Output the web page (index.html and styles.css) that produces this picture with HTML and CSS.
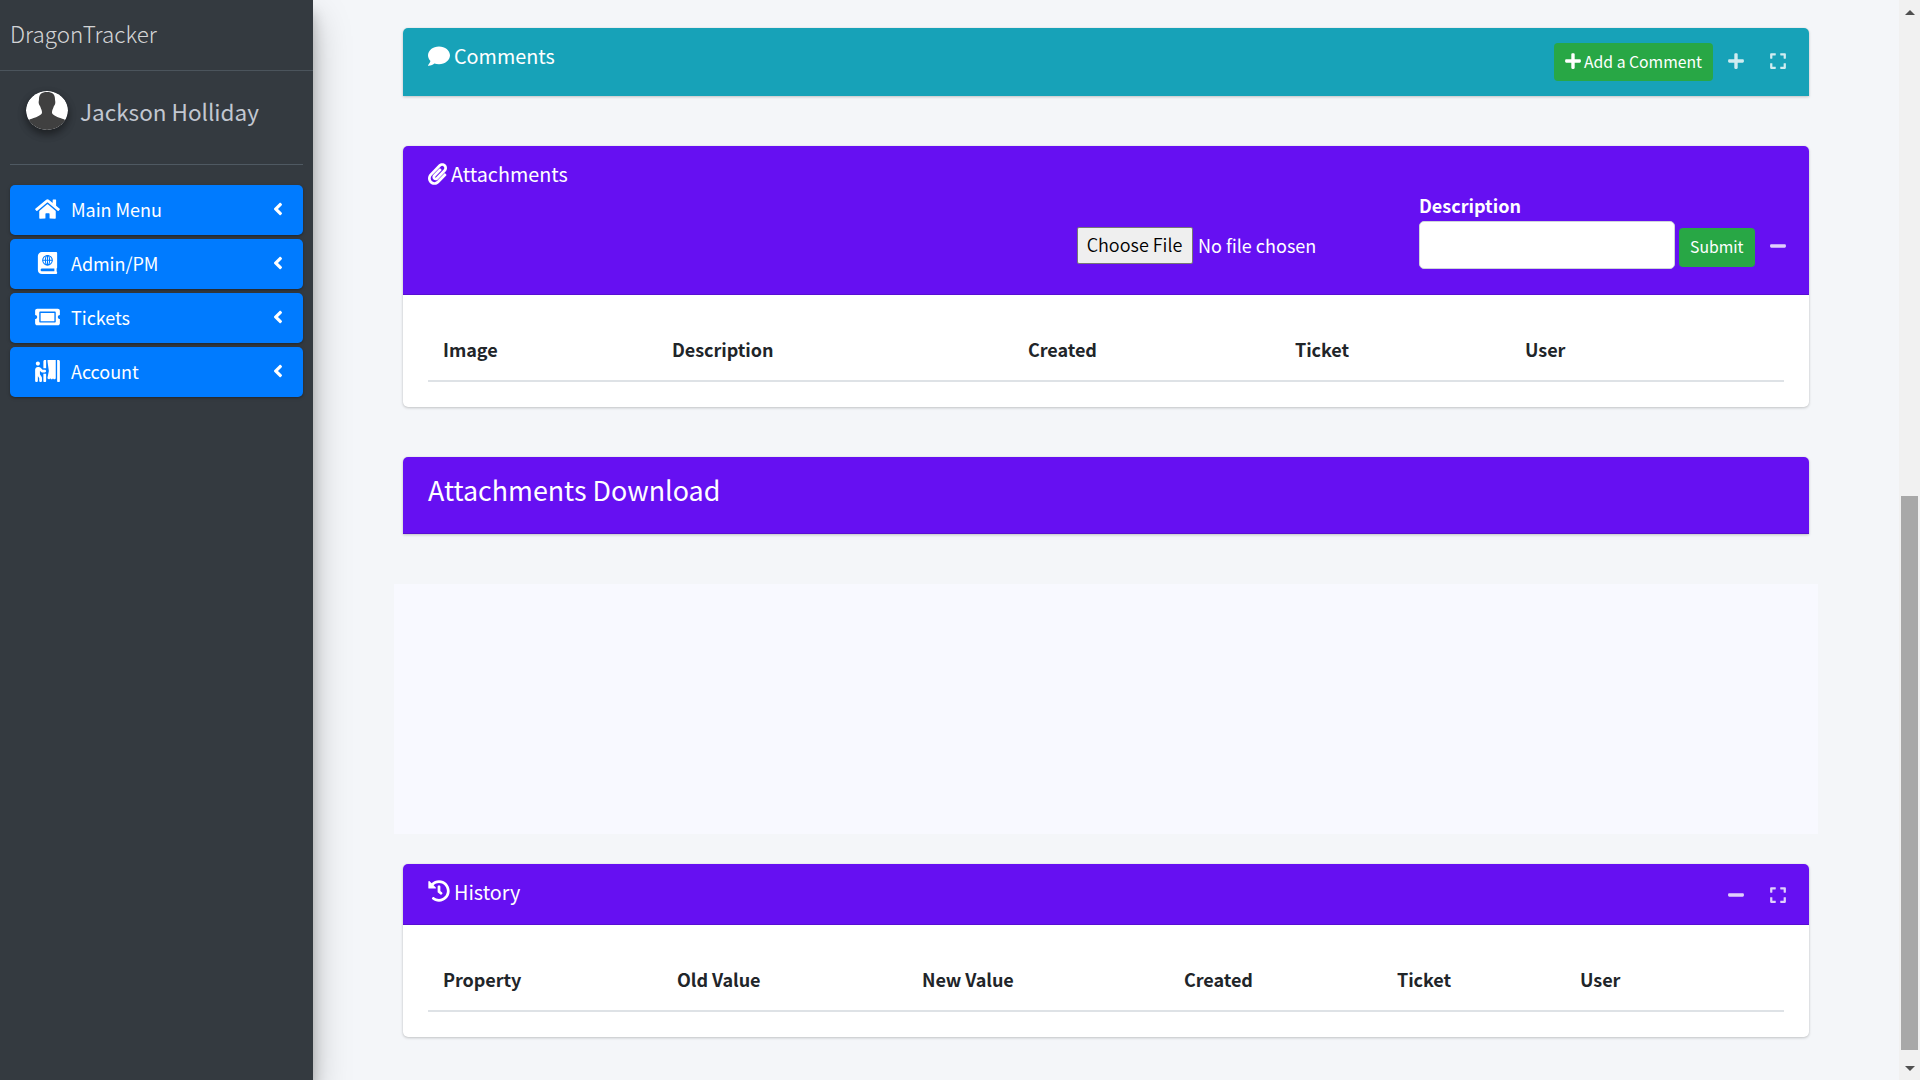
FILE: index.html
```html
<!DOCTYPE html>
<html lang="en">
<head>
<meta charset="utf-8">
<title>DragonTracker</title>
<link rel="stylesheet" href="styles.css">
</head>
<body>
<svg class="sprite" aria-hidden="true">
  <symbol id="home" viewBox="0 0 576 512"><path d="M280.37 148.26L96 300.11V464a16 16 0 0 0 16 16l112.06-.29a16 16 0 0 0 15.92-16V368a16 16 0 0 1 16-16h64a16 16 0 0 1 16 16v95.64a16 16 0 0 0 16 16.05L464 480a16 16 0 0 0 16-16V300L295.67 148.26a12.19 12.19 0 0 0-15.3 0zM571.6 251.47L488 182.56V44.05a12 12 0 0 0-12-12h-56a12 12 0 0 0-12 12v72.61L318.47 43a48 48 0 0 0-61 0L4.34 251.47a12 12 0 0 0-1.6 16.9l25.5 31A12 12 0 0 0 45.15 301l235.22-193.74a12.19 12.19 0 0 1 15.3 0L530.9 301a12 12 0 0 0 16.9-1.6l25.5-31a12 12 0 0 0-1.7-16.93z"/></symbol>
  <symbol id="atlas" viewBox="0 0 448 512"><path d="M448 358.4V25.6c0-16-9.6-25.6-25.6-25.6H96C41.6 0 0 41.6 0 96v320c0 54.4 41.6 96 96 96h326.4c12.8 0 25.6-9.6 25.6-25.6v-16c0-6.4-3.2-12.8-9.6-19.2-3.2-16-3.2-60.8 0-73.6 6.4-3.2 9.6-9.6 9.6-19.2zM384 448H96c-16 0-32-16-32-32s16-32 32-32h288v64z"/><g fill="none" stroke="#007bff" stroke-width="24"><circle cx="224" cy="192" r="112"/><ellipse cx="224" cy="192" rx="48" ry="112"/><path d="M112 192h224M224 80v224"/></g></symbol>
  <symbol id="ticket" viewBox="0 0 576 512"><path d="M128 160h320v192H128V160zm400 96c0 26.51 21.49 48 48 48v96c0 26.51-21.49 48-48 48H48c-26.51 0-48-21.49-48-48v-96c26.51 0 48-21.49 48-48s-21.49-48-48-48v-96c0-26.51 21.49-48 48-48h480c26.51 0 48 21.49 48 48v96c-26.51 0-48 21.49-48 48zm-48-104c0-13.255-10.745-24-24-24H120c-13.255 0-24 10.745-24 24v208c0 13.255 10.745 24 24 24h336c13.255 0 24-10.745 24-24V152z"/></symbol>
  <symbol id="booth" viewBox="0 0 576 512"><path d="M192 496c0 8.8 7.2 16 16 16h32c8.8 0 16-7.2 16-16V320h-64v176zm32-272h-50.9l-45.2-45.3C115.8 166.6 99.7 160 82.7 160H64c-17.1 0-33.2 6.7-45.3 18.8C6.7 190.9 0 206.9 0 224.1L.2 320 0 480c0 17.7 14.3 32 31.9 32 17.6 0 32-14.3 32-32l.1-100.7c.9.5 1.6 1.3 2.5 1.7l29.1 43v56c0 17.7 14.3 32 32 32s32-14.3 32-32v-56.5c0-9.9-2.3-19.8-6.7-28.6l-41.2-61.3V253l20.9 20.9c9.1 9.1 21.1 14.1 33.9 14.1H224c17.7 0 32-14.3 32-32s-14.3-32-32-32zM64 128c26.5 0 48-21.5 48-48S90.500 32 64 32 16 53.500 16 80s21.500 48 48 48zm224-96l31.500 223.100-30.900 154.600c-4.300 21.600 13 38.300 31.400 38.300 15.200 0 28-9.100 32.300-30.400.9 16.900 14.600 30.400 31.700 30.400 17.700 0 32-14.300 32-32 0 17.700 14.300 32 32 32s32-14.300 32-32V0H288v32zm-96 0v160h64V0h-32c-17.700 0-32 14.300-32 32zM544 0h-32v496c0 8.800 7.200 16 16 16h32c8.800 0 16-7.200 16-16V32c0-17.700-14.300-32-32-32z"/></symbol>
  <symbol id="angle" viewBox="0 0 256 512"><path d="M31.7 239l136-136c9.4-9.4 24.6-9.4 33.9 0l22.6 22.6c9.4 9.4 9.4 24.6 0 33.9L127.9 256l96.4 96.4c9.4 9.4 9.4 24.6 0 33.9L201.7 409c-9.4 9.4-24.6 9.4-33.9 0l-136-136c-9.5-9.4-9.5-24.6-.1-34z"/></symbol>
  <symbol id="comment" viewBox="0 0 512 512"><path d="M256 32C114.6 32 0 125.1 0 240c0 49.6 21.4 95 57 130.7C44.5 421.1 2.7 466 2.2 466.5c-2.2 2.3-2.8 5.7-1.5 8.7S4.8 480 8 480c66.3 0 116-31.8 140.6-51.4 32.7 12.3 69 19.4 107.4 19.4 141.4 0 256-93.1 256-208S397.4 32 256 32z"/></symbol>
  <symbol id="clip" viewBox="0 0 448 512"><path d="M43.246 466.142c-58.43-60.289-57.341-157.511 1.386-217.581L254.392 34c44.316-45.332 116.351-45.336 160.671 0 43.89 44.894 43.943 117.329 0 162.276L232.214 383.128c-29.855 30.537-78.633 30.111-107.982-.998-28.275-29.97-27.368-77.473 1.452-106.953l143.743-146.835c6.182-6.314 16.312-6.422 22.626-.241l22.861 22.379c6.315 6.182 6.422 16.312.241 22.626L171.427 319.927c-4.932 5.045-5.236 13.428-.648 18.292 4.372 4.634 11.245 4.711 15.688.165l182.849-186.851c19.613-20.062 19.613-52.725-.011-72.798-19.189-19.627-49.957-19.637-69.154 0L90.39 293.295c-34.763 35.56-35.299 93.12-1.191 128.313 34.01 35.093 88.985 35.137 123.058.286l172.06-175.999c6.177-6.319 16.307-6.433 22.626-.256l22.877 22.364c6.319 6.177 6.434 16.307.256 22.626l-172.06 175.998c-59.576 60.938-155.943 60.216-214.77-.485z"/></symbol>
  <symbol id="history" viewBox="0 0 512 512"><path d="M504 255.531c.253 136.64-111.18 248.372-247.82 248.468-59.015.042-113.223-20.53-155.822-54.911-11.077-8.94-11.905-25.541-1.839-35.607l11.267-11.267c8.609-8.609 22.353-9.551 31.891-1.984C173.062 425.135 212.781 440 256 440c101.705 0 184-82.311 184-184 0-101.705-82.311-184-184-184-48.814 0-93.149 18.969-126.068 49.932l50.754 50.754c10.08 10.08 2.941 27.314-11.313 27.314H24c-8.837 0-16-7.163-16-16V38.627c0-14.254 17.234-21.393 27.314-11.314l49.372 49.372C129.209 34.136 189.552 8 256 8c136.81 0 247.747 110.78 248 247.531zm-180.912 78.784l9.823-12.63c8.138-10.463 6.253-25.542-4.21-33.679L288 256.349V152c0-13.255-10.745-24-24-24h-16c-13.255 0-24 10.745-24 24v135.651l65.409 50.874c10.463 8.137 25.541 6.253 33.679-4.21z"/></symbol>
  <symbol id="plus" viewBox="0 0 448 512"><path d="M416 208H272V64c0-17.67-14.33-32-32-32h-32c-17.67 0-32 14.33-32 32v144H32c-17.67 0-32 14.33-32 32v32c0 17.67 14.33 32 32 32h144v144c0 17.67 14.33 32 32 32h32c17.67 0 32-14.33 32-32V304h144c17.67 0 32-14.33 32-32v-32c0-17.67-14.33-32-32-32z"/></symbol>
  <symbol id="minus" viewBox="0 0 448 512"><path d="M416 208H32c-17.67 0-32 14.33-32 32v32c0 17.67 14.33 32 32 32h384c17.67 0 32-14.33 32-32v-32c0-17.67-14.33-32-32-32z"/></symbol>
  <symbol id="expand" viewBox="0 0 448 512"><path d="M0 180V56c0-13.3 10.7-24 24-24h124c6.6 0 12 5.4 12 12v40c0 6.6-5.4 12-12 12H64v84c0 6.6-5.4 12-12 12H12c-6.6 0-12-5.4-12-12zM288 44v40c0 6.6 5.4 12 12 12h84v84c0 6.6 5.4 12 12 12h40c6.6 0 12-5.4 12-12V56c0-13.3-10.7-24-24-24H300c-6.6 0-12 5.4-12 12zm148 276h-40c-6.6 0-12 5.4-12 12v84h-84c-6.6 0-12 5.4-12 12v40c0 6.6 5.4 12 12 12h124c13.3 0 24-10.7 24-24V332c0-6.6-5.4-12-12-12zM160 468v-40c0-6.6-5.4-12-12-12H64v-84c0-6.6-5.4-12-12-12H12c-6.6 0-12 5.4-12 12v124c0 13.3 10.7 24 24 24h124c6.6 0 12-5.4 12-12z"/></symbol>
</svg>
<div class="app">
  <aside class="sidebar">
    <a class="brand">DragonTracker</a>
    <div class="user">
      <svg class="avatar" viewBox="0 0 42 39"><defs><clipPath id="face"><ellipse cx="21" cy="19.5" rx="21" ry="19.5"/></clipPath></defs><g clip-path="url(#face)"><path fill="#fff" d="M0 0h42v39H0z"/><path fill="#404040" d="M21 1c5.500 0 8 2.500 8 7 0 2 .6 2.500.2 4.500-.5 2-1.200 2-1.600 3.500-.8 2.500-1.600 3-1.600 5.500 0 2.500 5 4.500 9 5.800 3 1 6 2 7 5.700v6H0v-6c1-3.700 4-4.700 7-5.700 4-1.300 9-3.300 9-5.800 0-2.500-.8-3-1.600-5.500-.4-1.500-1.100-1.500-1.600-3.500-.4-2 .2-2.500.2-4.500 0-4.500 2.500-7 8-7z"/></g></svg>
      <span class="user-name">Jackson Holliday</span>
    </div>
    <nav class="menu">
      <a class="menu-item"><svg class="menu-icon"><use href="#home"/></svg><span class="menu-text">Main Menu</span><svg class="angle"><use href="#angle"/></svg></a>
      <a class="menu-item"><svg class="menu-icon"><use href="#atlas"/></svg><span class="menu-text">Admin/PM</span><svg class="angle"><use href="#angle"/></svg></a>
      <a class="menu-item"><svg class="menu-icon"><use href="#ticket"/></svg><span class="menu-text">Tickets</span><svg class="angle"><use href="#angle"/></svg></a>
      <a class="menu-item"><svg class="menu-icon"><use href="#booth"/></svg><span class="menu-text">Account</span><svg class="angle"><use href="#angle"/></svg></a>
    </nav>
  </aside>
  <main class="content">
    <section class="card comments">
      <header class="card-header">
        <h3 class="card-title"><svg class="title-icon"><use href="#comment"/></svg>Comments</h3>
        <div class="tools">
          <button class="btn btn-add"><svg class="tool-icon"><use href="#plus"/></svg>Add a Comment</button>
          <svg class="tool-icon tool"><use href="#plus"/></svg>
          <svg class="tool-icon tool"><use href="#expand"/></svg>
        </div>
      </header>
    </section>
    <section class="card attachments">
      <header class="card-header">
        <h3 class="card-title"><svg class="title-icon narrow"><use href="#clip"/></svg>Attachments</h3>
        <form class="upload">
          <div class="file"><button type="button" class="file-btn">Choose File</button><span class="file-name">No file chosen</span></div>
          <div class="field"><label class="label" for="desc">Description</label><input class="input" id="desc" type="text"></div>
          <button type="button" class="btn btn-submit">Submit</button>
          <svg class="tool-icon tool"><use href="#minus"/></svg>
        </form>
      </header>
      <div class="card-body">
        <div class="thead cols-files"><span>Image</span><span>Description</span><span>Created</span><span>Ticket</span><span>User</span></div>
      </div>
    </section>
    <section class="card download">
      <header class="card-header"><h2 class="download-title">Attachments Download</h2></header>
    </section>
    <div class="placeholder"></div>
    <section class="card history">
      <header class="card-header">
        <h3 class="card-title"><svg class="title-icon"><use href="#history"/></svg>History</h3>
        <div class="tools">
          <svg class="tool-icon tool"><use href="#minus"/></svg>
          <svg class="tool-icon tool"><use href="#expand"/></svg>
        </div>
      </header>
      <div class="card-body">
        <div class="thead cols-history"><span>Property</span><span>Old Value</span><span>New Value</span><span>Created</span><span>Ticket</span><span>User</span></div>
      </div>
    </section>
  </main>
  <div class="scrollbar">
    <span class="arrow up"></span>
    <span class="thumb"></span>
    <span class="arrow down"></span>
  </div>
</div>
</body>
</html>
```
FILE: styles.css
```css
* { box-sizing: border-box; }
body {
  margin: 0;
  height: 1080px;
  overflow: hidden;
  background: #f4f6f9;
  color: #212529;
  font: 400 18px/30px "Noto Sans CJK SC", "Noto Sans", sans-serif;
}
svg { fill: currentColor; flex: none; display: block; }
button { font-family: inherit; margin: 0; }
.sprite { display: none; }
.app { display: flex; height: 1080px; }

/* Sidebar */
.sidebar {
  width: 313px;
  flex: none;
  background: #343a40;
  box-shadow: 0 17.5px 35px rgba(0,0,0,.25), 0 12.5px 12.5px rgba(0,0,0,.22);
}
.brand {
  display: block;
  height: 71px;
  padding: 14px 10px 0;
  border-bottom: 1px solid #4b545c;
  color: rgba(255,255,255,.8);
  font-size: 22.4px;
  line-height: 38px;
  font-weight: 300;
}
.user {
  display: flex;
  align-items: flex-start;
  gap: 12px;
  height: 94px;
  margin: 0 10px;
  padding: 20px 16px 0;
  border-bottom: 1px solid #4f5962;
  color: #c2c7d0;
}
.avatar {
  width: 42px;
  height: 39px;
  border-radius: 50%;
  box-shadow: 0 4px 8px rgba(0,0,0,.3), 0 4px 8px rgba(0,0,0,.23);
}
.user-name { font-size: 22.5px; line-height: 40px; }
.menu { display: grid; gap: 4px; padding: 20px 10px; }
.menu-item {
  display: flex;
  align-items: center;
  height: 50px;
  padding: 0 20px 2px 25px;
  border-radius: 5px;
  background: #007bff;
  color: #fff;
  box-shadow: 0 1px 4px rgba(0,0,0,.12), 0 1px 2px rgba(0,0,0,.24);
}
.menu-icon { width: 25px; height: 22px; }
.menu-text { flex: 1; margin-left: 11px; letter-spacing: -.05px; }
.angle { width: 10px; height: 20px; }

/* Cards */
.content {
  flex: 1;
  display: flex;
  flex-direction: column;
  padding: 28px 90px 0;
}
.card {
  flex: none;
  margin-bottom: 50px;
  border-radius: 5px;
  background: #fff;
  box-shadow: 0 0 1px rgba(0,0,0,.125), 0 1px 3px rgba(0,0,0,.2);
}
.card-header {
  display: flex;
  justify-content: space-between;
  height: 61px;
  padding: 15px 25px 0;
  border-radius: 5px 5px 0 0;
  border-bottom: 1px solid rgba(0,0,0,.125);
  background: #6610f2;
  color: #fff;
}
.card-title {
  display: flex;
  gap: 4px;
  height: 30px;
  margin: 0;
  font-size: 19.8px;
  line-height: 26px;
  font-weight: 400;
}
.title-icon { width: 22px; height: 22px; margin-top: 2px; }
.title-icon.narrow { width: 19px; }
.tools { display: flex; align-items: center; height: 38px; gap: 26px; margin-right: -2px; }
.tool { opacity: .8; }
.tool-icon { width: 16px; height: 18px; }
.comments, .comments .card-header { height: 68px; border-radius: 5px 5px 0 0; }
.comments .card-header { background: #17a2b8; border-bottom: 0; }
.comments .tool { margin-top: -2px; }
.btn {
  display: flex;
  align-items: center;
  height: 38px;
  padding: 0 11px;
  border: 0;
  border-radius: 4px;
  background: #28a745;
  color: #fff;
  font-size: 15.75px;
  line-height: 26px;
  white-space: nowrap;
}
.btn-add { width: 159px; gap: 3px; margin-right: -11px; }
.btn-add .tool-icon { margin-top: -2px; }

.attachments .card-header { height: 149px; }
.attachments .card-body { height: 112px; }
.upload {
  display: flex;
  align-items: flex-start;
  padding-top: 22px;
  margin-right: -2px;
}
.file { display: flex; gap: 5px; margin: 44px 105px 0 0; }
.file-btn {
  width: 116px;
  height: 37px;
  padding: 0 1px 3px 0;
  border: 1px solid #767676;
  border-radius: 2px;
  background: #efefef;
  color: #000;
  font-size: 18px;
  font-weight: 350;
  white-space: nowrap;
}
.file-name { width: 116px; line-height: 36px; white-space: nowrap; }
.field { display: flex; flex-direction: column; width: 256px; }
.label { height: 38px; line-height: 44px; font-weight: 700; }
.input {
  width: 256px;
  height: 48px;
  border: 1px solid #ced4da;
  border-radius: 5px;
  background: #fff;
}
.btn-submit { width: 76px; height: 39px; margin: 45px 15px 0 4px; padding-bottom: 2px; }
.upload .tool { margin-top: 54px; }

.card-body { height: 112px; padding: 25px; }
.thead {
  display: grid;
  height: 62px;
  padding-top: 14px;
  border-bottom: 2px solid #dee2e6;
  font-weight: 700;
  letter-spacing: -.05px;
}
.thead span { padding-left: 15px; }
.cols-files { grid-template-columns: 229px 356px 267px 230px 1fr; }
.cols-history { grid-template-columns: 234px 245px 262px 213px 183px 1fr; }

.download, .download .card-header { height: 77px; border-radius: 5px 5px 0 0; }
.download-title { margin: 0; font-size: 26.85px; line-height: 36px; font-weight: 400; }
.placeholder { flex: none; height: 250px; margin: 0 -9px 30px; background: #f8f9ff; }
.history .card-header { height: 61px; padding-top: 14px; }
.history .card-title { line-height: 28px; }
.history .tools { height: 34px; }

/* Scrollbar */
.scrollbar {
  display: flex;
  flex-direction: column;
  align-items: center;
  justify-content: space-between;
  width: 21px;
  flex: none;
  padding: 10px 0 9px;
  background: #f1f1f1;
}
.arrow { border: 5px solid transparent; }
.up { border-top: 0; border-bottom: 5px solid #505050; }
.down { border-bottom: 0; border-top: 5px solid #505050; }
.thumb { width: 17px; height: 554px; margin-top: 465px; background: #a8a8a8; }
```
